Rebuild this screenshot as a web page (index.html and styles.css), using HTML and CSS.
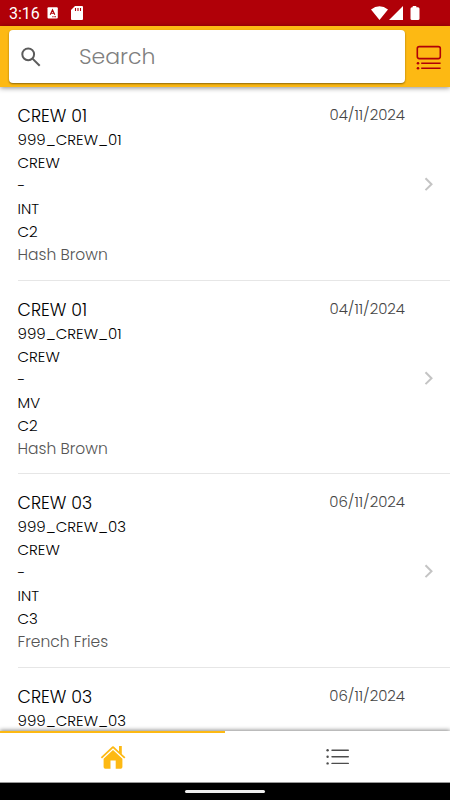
FILE: index.html
```
<!DOCTYPE html>
<html lang="en">
<head>
  <meta charset="UTF-8">
  <meta name="viewport" content="width=device-width, initial-scale=1.0">
  <title>Crew List</title>
  <link rel="stylesheet" href="styles.css">
</head>
<body>
  <div class="status-bar">
    <span class="clock">3:16</span>
    <svg class="status-icon-a" width="12" height="12" viewBox="0 0 12 12">
      <rect x="0.5" y="0.3" width="10.3" height="11.2" rx="1" fill="#fff"/>
      <path d="M3.2 7.8 5.5 2.8 7.8 7.8M4 6.3H7M5.3 9.8H6.6M7.3 9.8H9" fill="none" stroke="#b00008" stroke-width="1.1"/>
    </svg>
    <svg class="status-icon-sd" width="12" height="14" viewBox="0 0 12 14">
      <path d="M4 0H11Q12 0 12 1V13Q12 14 11 14H1Q0 14 0 13V4Z" fill="#fff"/>
      <path d="M4.5 2V5M7 2V5M9.5 2V5" stroke="#b00008" stroke-width="1.1"/>
    </svg>
    <svg class="status-right" width="50" height="15" viewBox="0 0 50 15">
      <path d="M0 3.5Q8.5 -3 17 3.5L8.5 14ZM18 14 32 0V14ZM41.7 0H45.3V1.3H47Q48.5 1.3 48.5 2.8V12.7Q48.5 14 47 14H41Q39.5 14 39.5 12.7V2.8Q39.5 1.3 41 1.3H41.7Z" fill="#fff"/>
    </svg>
  </div>

  <div class="toolbar">
    <div class="searchbar">
      <svg width="20" height="20" viewBox="0 0 20 20">
        <g fill="none" stroke="#5b5b5b" stroke-width="2">
          <circle cx="7.2" cy="7.3" r="5.9"/>
          <path d="M11.5 11.6 18.7 18.8"/>
        </g>
      </svg>
      <span class="placeholder">Search</span>
    </div>
    <svg class="view-toggle" width="26" height="26" viewBox="0 0 26 26">
      <g fill="none" stroke="#b00008" stroke-width="1.6">
        <rect x="1.3" y="1.6" width="23" height="12" rx="2"/>
        <path d="M5.2 18.2H24.6M5.2 23.3H24.6"/>
      </g>
      <circle cx="2" cy="18.2" r="1.3" fill="#b00008"/>
      <circle cx="2" cy="23.3" r="1.3" fill="#b00008"/>
    </svg>
  </div>

  <div class="list" id="list">
    <div class="item">
      <div class="item-text">
        <h2>CREW 01</h2>
        <p class="code">999_CREW_01</p>
        <p>CREW</p>
        <p>-</p>
        <p>INT</p>
        <p>C2</p>
        <p class="product">Hash Brown</p>
      </div>
      <span class="date">04/11/2024</span>
      <svg class="chevron" width="10" height="14" viewBox="0 0 10 14"><path d="M1.5 1.3 7.5 7.2 1.5 13.1"/></svg>
    </div>
    <div class="item">
      <div class="item-text">
        <h2>CREW 01</h2>
        <p class="code">999_CREW_01</p>
        <p>CREW</p>
        <p>-</p>
        <p>MV</p>
        <p>C2</p>
        <p class="product">Hash Brown</p>
      </div>
      <span class="date">04/11/2024</span>
      <svg class="chevron" width="10" height="14" viewBox="0 0 10 14"><path d="M1.5 1.3 7.5 7.2 1.5 13.1"/></svg>
    </div>
    <div class="item">
      <div class="item-text">
        <h2>CREW 03</h2>
        <p class="code">999_CREW_03</p>
        <p>CREW</p>
        <p>-</p>
        <p>INT</p>
        <p>C3</p>
        <p class="product">French Fries</p>
      </div>
      <span class="date">06/11/2024</span>
      <svg class="chevron" width="10" height="14" viewBox="0 0 10 14"><path d="M1.5 1.3 7.5 7.2 1.5 13.1"/></svg>
    </div>
    <div class="item">
      <div class="item-text">
        <h2>CREW 03</h2>
        <p class="code">999_CREW_03</p>
      </div>
      <span class="date">06/11/2024</span>
    </div>
  </div>

  <div class="tabs">
    <div class="tab active">
      <svg width="26" height="24" viewBox="0 0 26 24" fill="#fdb913">
        <path d="M0.8 12.3 12.2 1.5Q13 0.8 13.8 1.5L19 6.4V1H21.8V9L25.4 12.3 24.2 13.6 13 3.2 2 13.6Z"/>
        <path d="M3.6 13.8 13 5 22.4 13.8V22Q22.4 23.7 20.7 23.7H15.7V15.5H10.5V23.7H5.3Q3.6 23.7 3.6 22Z"/>
      </svg>
    </div>
    <div class="tab">
      <svg width="24" height="18" viewBox="0 0 24 18">
        <path d="M6 2.2H22.3M6 8.8H22.3M6 15.4H22.3" stroke="#4d4d4d" stroke-width="1.4" stroke-linecap="round"/>
        <g fill="#4d4d4d"><circle cx="1.6" cy="2.2" r="1.2"/><circle cx="1.6" cy="8.8" r="1.2"/><circle cx="1.6" cy="15.4" r="1.2"/></g>
      </svg>
    </div>
  </div>
  <div class="nav-bar"><span class="handle"></span></div>
</body>
</html>
```
FILE: styles.css
```
* {
  box-sizing: border-box;
}

body {
  margin: 0;
  height: 800px;
  overflow: hidden;
  display: flex;
  flex-direction: column;
  font-family: Poppins, Inter, sans-serif;
  font-weight: 300;
  background: #fff;
  color: #000;
}

svg {
  display: block;
  flex: none;
}

.status-bar {
  height: 26px;
  flex: none;
  display: flex;
  align-items: center;
  padding: 0 29px 0 9px;
  background: #b00008;
}

.clock {
  width: 38px;
  font: 16px/26px Roboto, sans-serif;
  color: #fff;
  padding-top: 2px;
}

.status-icon-sd {
  margin-left: 12px;
}

.status-right {
  margin-left: auto;
}

.toolbar {
  position: relative;
  height: 61px;
  flex: none;
  display: flex;
  align-items: flex-start;
  padding: 4px 8px 0 9px;
  background: #fdb913;
  box-shadow: 0 1px 5px rgba(0, 0, 0, 0.45);
}

.searchbar {
  width: 396px;
  height: 53px;
  display: flex;
  align-items: center;
  padding-left: 12px;
  background: #fff;
  border-radius: 4px;
  box-shadow: 0 1px 2px rgba(0, 0, 0, 0.45);
}

.placeholder {
  margin-left: 38px;
  font-size: 22px;
  color: #808080;
}

.view-toggle {
  margin: 15px 0 0 11px;
}

.list {
  flex: 1;
  min-height: 0;
  overflow: hidden;
}

.item {
  height: 193.7px;
  display: flex;
  align-items: flex-start;
  margin-left: 17.5px;
  padding-top: 17px;
  border-bottom: 1px solid #e6e6e6;
}

.item-text {
  flex: 1;
}

h2 {
  margin: 0 0 -1px;
  font-size: 17.4px;
  font-weight: 300;
  line-height: 25px;
}

p {
  margin: 0;
  font-size: 15px;
  line-height: 23px;
}

.product {
  font-size: 15.5px;
  color: #555;
}

.date {
  font-size: 14.9px;
  line-height: 22px;
  color: #444;
}

.chevron {
  margin: 73px 16px 0 19px;
  fill: none;
  stroke: #c4c4c4;
  stroke-width: 2;
}

.item:last-child .date {
  margin-right: 45px;
}

.tabs {
  position: relative;
  height: 52px;
  flex: none;
  display: flex;
  background: #fff;
  border-bottom: 1px solid #999;
  box-shadow: 0 -1px 4px rgba(0, 0, 0, 0.45);
}

.tab {
  flex: 1;
  display: flex;
  align-items: center;
  justify-content: center;
  border-top: 2px solid transparent;
}

.tab svg {
  margin-top: -1px;
}

.tab.active {
  border-top-color: #fdb913;
}

.nav-bar {
  height: 17px;
  flex: none;
  display: flex;
  align-items: center;
  justify-content: center;
  background: #000;
}

.handle {
  width: 80px;
  height: 3px;
  border-radius: 2px;
  background: #eee;
}
```
